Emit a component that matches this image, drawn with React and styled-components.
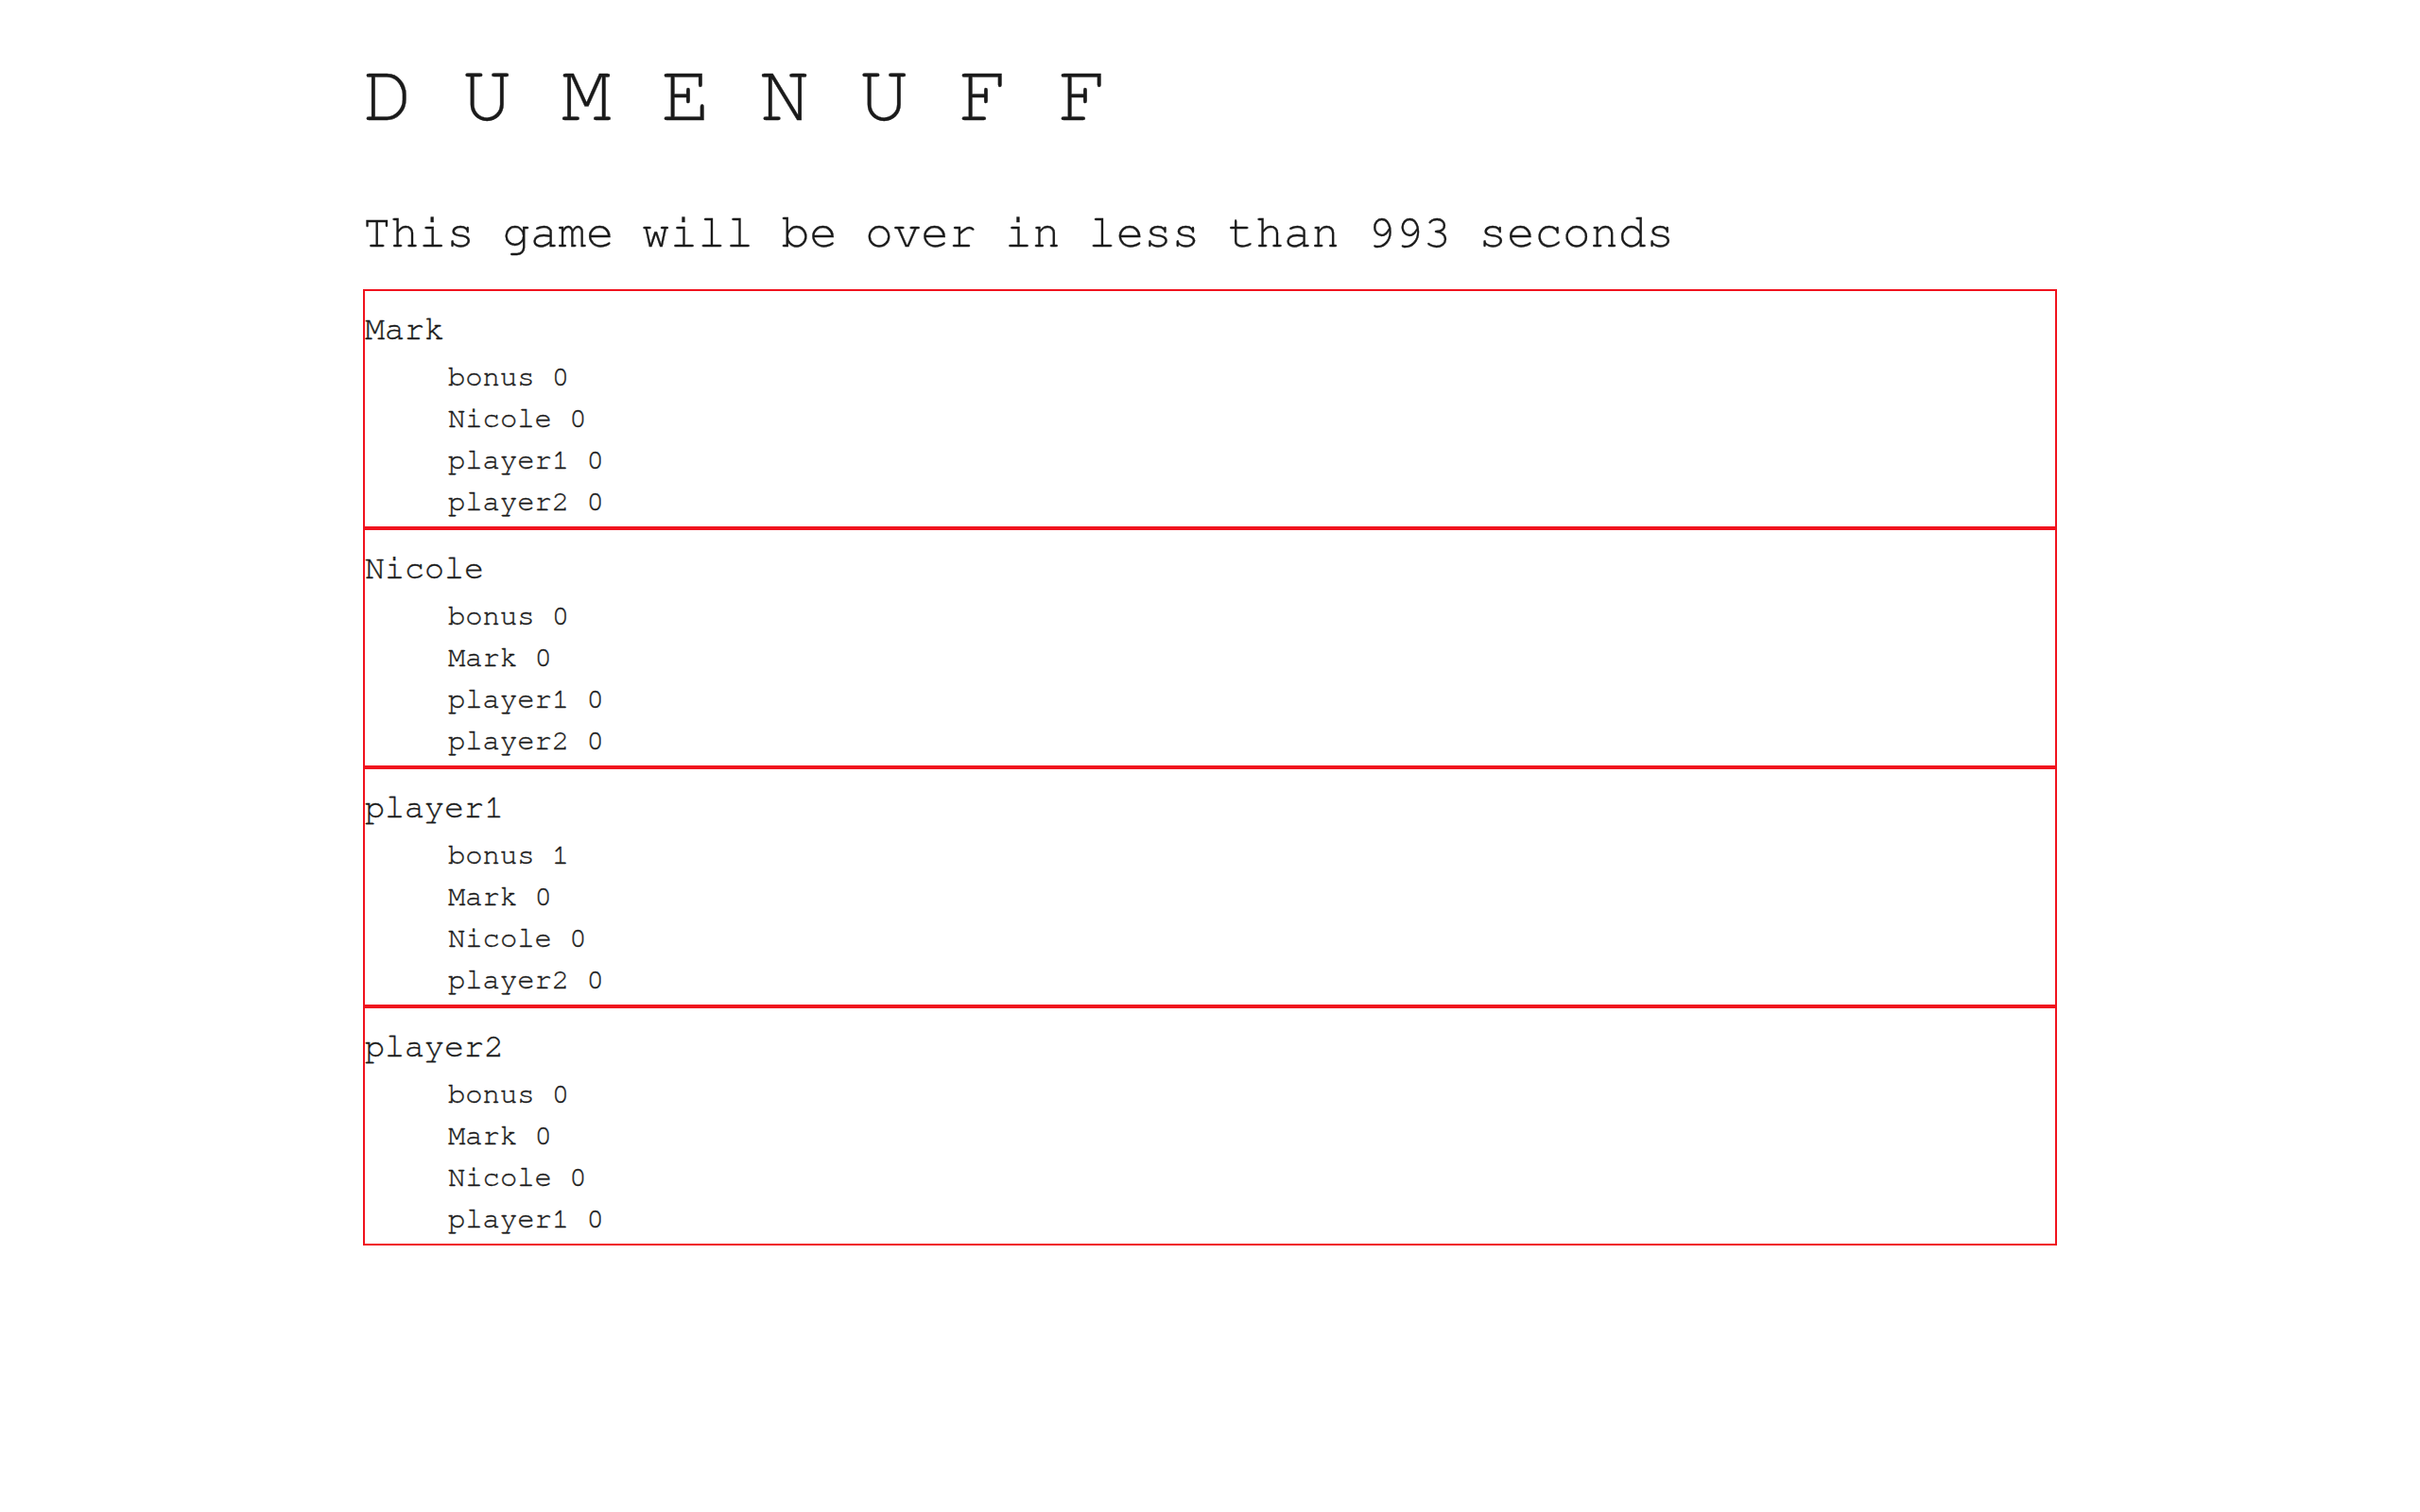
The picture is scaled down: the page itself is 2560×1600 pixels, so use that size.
import styled, { createGlobalStyle } from 'styled-components'

const GlobalStyle = createGlobalStyle`
	html, body {
		margin: 0;
		padding: 0;
		background: #ffffff;
	}

	body {
		font-family: 'Nimbus Mono PS', 'Nimbus Mono L', FreeMono, Courier, 'Courier New', 'Liberation Mono', monospace;
		color: #1a1a1a;
		-webkit-text-stroke: 0.35px #1a1a1a;
	}
`

const scores = [
	{
		name: 'Mark',
		points: [
			['bonus', 0],
			['Nicole', 0],
			['player1', 0],
			['player2', 0],
		],
	},
	{
		name: 'Nicole',
		points: [
			['bonus', 0],
			['Mark', 0],
			['player1', 0],
			['player2', 0],
		],
	},
	{
		name: 'player1',
		points: [
			['bonus', 1],
			['Mark', 0],
			['Nicole', 0],
			['player2', 0],
		],
	},
	{
		name: 'player2',
		points: [
			['bonus', 0],
			['Mark', 0],
			['Nicole', 0],
			['player1', 0],
		],
	},
]

function PlayerCard({ player }) {
	return (
		<CardWrapper>
			<p className='player-name'>{player.name}</p>
			<ul className='player-points'>
				{player.points.map(([other, value]) => (
					<li key={other}>
						{other} {value}
					</li>
				))}
			</ul>
		</CardWrapper>
	)
}

export default function App() {
	return (
		<>
			<GlobalStyle />
			<PageWrapper>
				<Title>D U M E N U F F</Title>
				<Countdown>This game will be over in less than 993 seconds</Countdown>
				<div>
					{scores.map((player) => (
						<PlayerCard key={player.name} player={player} />
					))}
				</div>
			</PageWrapper>
		</>
	)
}

const PageWrapper = styled.main`
	width: 70%;
	margin: 0 auto;
	padding-top: 57px;
	padding-bottom: 40px;
`

const Title = styled.h1`
	margin: 0 0 74px 0;
	font-size: 87.5px;
	line-height: 88px;
	font-weight: 400;
	white-space: pre;
`

const Countdown = styled.h2`
	margin: 0 0 31px 0;
	font-size: 49.2px;
	line-height: 56px;
	font-weight: 400;
`

const CardWrapper = styled.section`
	border: 2px solid #f0131e;
	padding: 21px 0 4px 0;

	.player-name {
		margin: 0 0 8px 0;
		font-size: 35px;
		line-height: 40px;
	}

	.player-points {
		list-style: none;
		margin: 0;
		padding: 0 0 0 88px;

		li {
			font-size: 30.5px;
			line-height: 44px;
			white-space: pre;
		}
	}
`
